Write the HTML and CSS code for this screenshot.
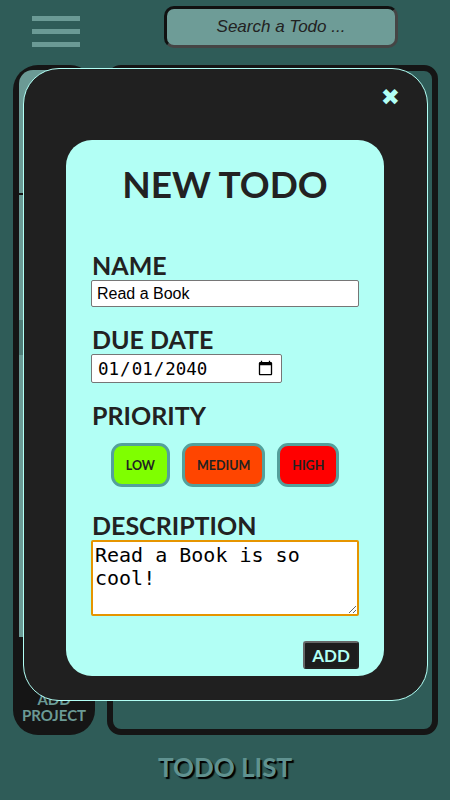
FILE: index.html
```html
<!DOCTYPE html>
<html lang="en">
<head>
  <meta charset="UTF-8">
  <title>Todo List</title>
  <link rel="stylesheet" href="styles.css">
</head>
<body>
  <header class="top-bar">
    <div class="hamburger">
      <span></span>
      <span></span>
      <span></span>
    </div>
    <input class="search" type="text" placeholder="Search a Todo ...">
  </header>

  <main class="layout">
    <aside class="sidebar">
      <div class="project-list">
        <div class="project-item"></div>
        <div class="project-thumb"></div>
      </div>
      <button class="add-project">ADD<br>PROJECT</button>
    </aside>
    <section class="todo-area"></section>
  </main>

  <footer class="footer">TODO LIST</footer>

  <div class="modal">
    <button class="close-btn">&#10006;</button>
    <form class="todo-card" onsubmit="return false">
      <h1 class="card-title">NEW TODO</h1>

      <div class="field field-name">
        <label for="name">NAME</label>
        <input id="name" type="text" value="Read a Book">
      </div>

      <div class="field">
        <label for="due">DUE DATE</label>
        <input id="due" class="date-input" type="date" value="2040-01-01">
      </div>

      <div class="field">
        <label>PRIORITY</label>
        <div class="priority-row">
          <button class="priority low">LOW</button>
          <button class="priority medium">MEDIUM</button>
          <button class="priority high">HIGH</button>
        </div>
      </div>

      <div class="field field-desc">
        <label for="desc">DESCRIPTION</label>
        <textarea id="desc" spellcheck="false">Read a Book is so cool!</textarea>
      </div>

      <div class="actions">
        <button class="add-btn">ADD</button>
      </div>
    </form>
  </div>
</body>
</html>
```

FILE: styles.css
```css
body { margin: 0; height: 800px; background-color: #2f5c58; font-family: Lato, "Open Sans", sans-serif; overflow: hidden; position: relative; }

.top-bar { display: flex; align-items: flex-start; padding: 6px 52px 0 32px; }
.hamburger { display: flex; flex-direction: column; gap: 8px; margin-top: 10px; }
.hamburger span { display: block; width: 48px; height: 5px; background-color: #6b9a95; }
.search { margin-left: auto; width: 234px; height: 42px; box-sizing: border-box; border: 3px solid; border-color: #111 #454545 #454545 #111; border-radius: 10px; background-color: #6e9c97; font-family: "Liberation Sans", Arial, sans-serif; font-size: 17px; font-style: italic; text-align: center; color: #222; }
.search::placeholder { color: #222; }

.layout { display: flex; height: 670px; margin-top: 17px; padding-left: 13px; }
.sidebar { width: 82px; background-color: #151515; border-radius: 25px; display: flex; flex-direction: column; align-items: center; }
.project-list { position: relative; width: 70px; height: 567px; margin-top: 5px; background-color: #6b9a95; border-radius: 14px 0 0 0; }
.project-item { height: 123px; border-bottom: 2px solid #151515; }
.project-thumb { margin-top: 125px; height: 35px; background-color: #4f7c77; }
.add-project { margin-top: auto; margin-bottom: 12px; padding: 0; background: none; border: none; color: #6b9a95; font-family: inherit; font-weight: bold; font-size: 15px; line-height: 16px; }
.todo-area { width: 331px; margin-left: 12px; box-sizing: border-box; border: 6px solid #151515; border-radius: 14px; }

.footer { text-align: center; margin-top: 16px; font-size: 26px; font-weight: bold; color: #609290; text-shadow: 2px 2px 1px #000; }

.modal { position: absolute; left: 23px; top: 68px; width: 405px; height: 633px; box-sizing: border-box; display: flex; padding: 71px 43px 24px 42px; background-color: #202020; border: 1px solid #b2fff5; border-radius: 36px; }
.close-btn { position: absolute; top: 15px; right: 27px; padding: 0; background: none; border: none; color: #b2fff5; font-family: "DejaVu Sans", sans-serif; font-size: 23px; line-height: 26px; }

.todo-card { flex: 1; display: flex; flex-direction: column; padding: 24px 25px 7px 25px; background-color: #b2fff5; border-radius: 26px; color: #222; }
.card-title { margin: 0; text-align: center; font-size: 37px; line-height: 40px; }

.field { display: flex; flex-direction: column; margin-top: 20px; }
.field-name { margin-top: 49px; }
.field label { display: block; font-size: 25px; font-weight: bold; line-height: 25px; margin-bottom: 2px; padding-left: 1px; }
.field input { font-family: "Liberation Sans", Arial, sans-serif; font-size: 16px; height: 27px; box-sizing: border-box; padding: 0 5px; border: 1px solid #767676; border-radius: 2px; background: white; color: #000; }
.field .date-input { width: 191px; height: 29px; font-family: "DejaVu Sans Mono", monospace; font-size: 17.5px; }

.priority-row { display: flex; justify-content: center; gap: 12px; margin-top: 13px; margin-bottom: 6px; }
.priority { height: 44px; padding: 0 12px; border: 3px solid #54a09b; border-radius: 11px; font-family: inherit; font-weight: bold; font-size: 12.5px; color: #222; }
.low { background-color: #7fff00; }
.medium { background-color: #ff4500; }
.high { background-color: #ff0000; }

.field textarea { height: 76px; box-sizing: border-box; padding: 2px; border: 2px solid #e69500; border-radius: 2px; font-family: "DejaVu Sans Mono", monospace; font-size: 20px; line-height: 23px; color: #000; background: white; resize: vertical; }

.actions { display: flex; justify-content: flex-end; margin-top: 25px; }
.add-btn { width: 56px; height: 28px; padding: 0; background-color: #1d1d1d; border: 2px solid; border-color: #666 #222 #222 #666; border-radius: 3px; color: #b2fff5; font-family: inherit; font-weight: bold; font-size: 17px; }
```
